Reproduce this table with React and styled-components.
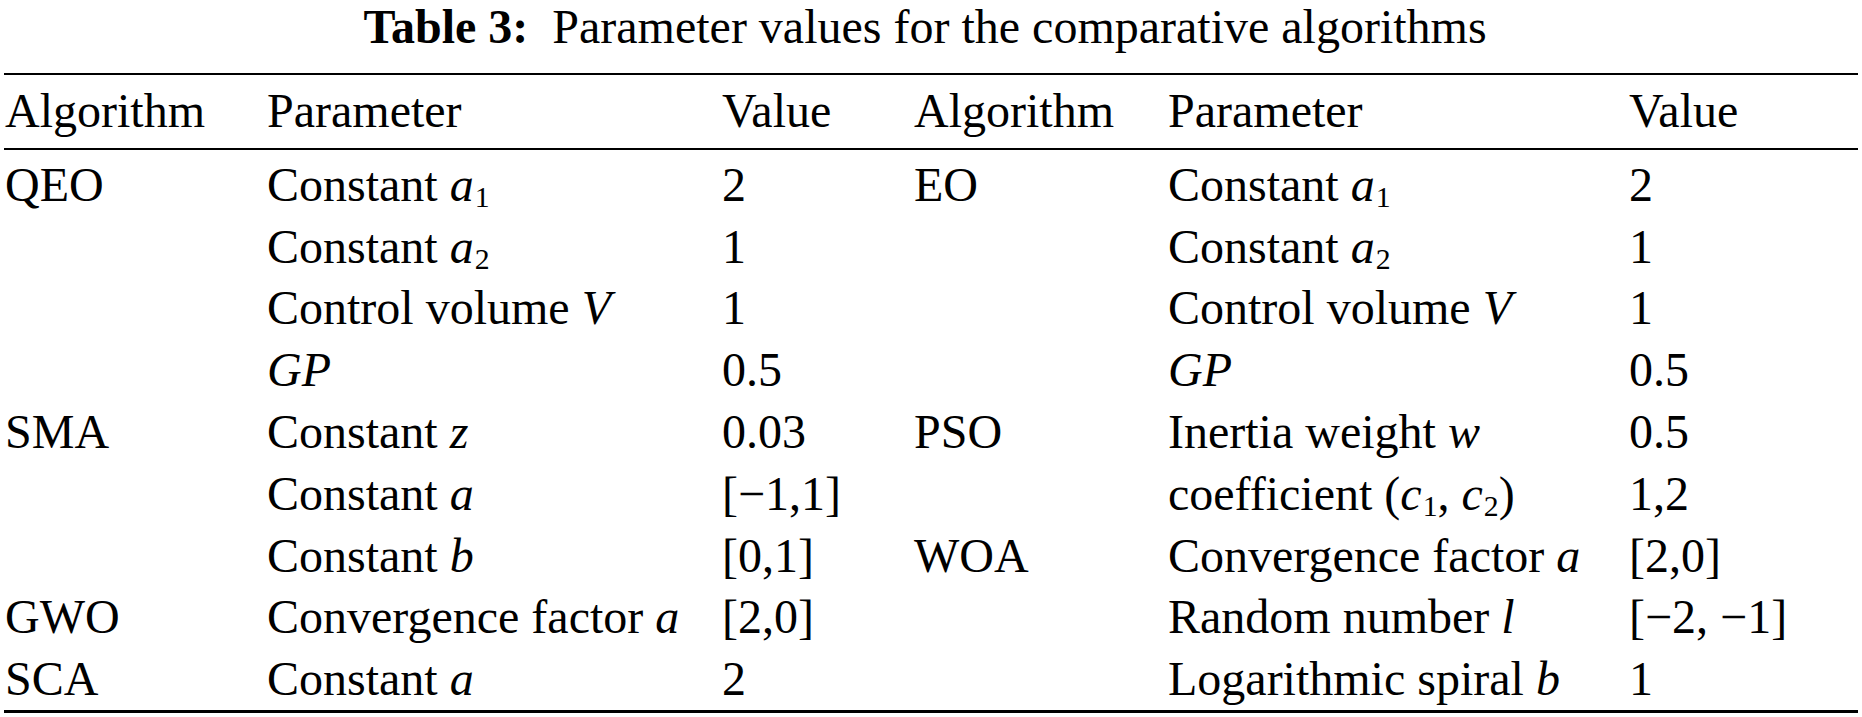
import React from 'react'
import styled, { createGlobalStyle } from 'styled-components'

const GlobalStyle = createGlobalStyle`
    html, body {
        margin: 0;
        padding: 0;
        background: #fff;
    }
    body {
        font-family: "Liberation Serif", "Times New Roman", serif;
        color: #000;
    }
`;

const Page = styled.div`
    width: 1862px;
    height: 717px;
    overflow: hidden;
    padding: 0 4px;
    box-sizing: border-box;
`;

const Caption = styled.div`
    font-size: 48px;
    line-height: 54px;
    text-align: center;
    padding-right: 12px;
`;

const CaptionLabel = styled.b`
    font-weight: bold;
    margin-right: 24px;
`;

const Table = styled.div`
    margin-top: 19px;
    border-top: 2.5px solid #000;
    border-bottom: 3px solid #000;
    font-size: 48px;
    line-height: 61.8px;
`;

const Row = styled.div`
    display: grid;
    grid-template-columns: 262px 455px 192px 254px 461px 1fr;
    padding-left: 1px;
    white-space: nowrap;
`;

const HeadRow = styled(Row)`
    padding-top: 5px;
    padding-bottom: 6px;
    border-bottom: 2px solid #000;
    margin-bottom: 4px;
`;

const Cell = styled.div``;

const Var = styled.i`
    font-style: italic;
`;

const Sub = styled.sub`
    font-size: 0.62em;
    line-height: 0;
    vertical-align: -0.22em;
    margin-left: 1px;
`;

const a1 = <><Var>a</Var><Sub>1</Sub></>;
const a2 = <><Var>a</Var><Sub>2</Sub></>;

const header = ['Algorithm', 'Parameter', 'Value', 'Algorithm', 'Parameter', 'Value'];

const rows = [
    ['QEO', <>Constant {a1}</>, '2', 'EO', <>Constant {a1}</>, '2'],
    ['', <>Constant {a2}</>, '1', '', <>Constant {a2}</>, '1'],
    ['', <>Control volume <Var>V</Var></>, '1', '', <>Control volume <Var>V</Var></>, '1'],
    ['', <Var>GP</Var>, '0.5', '', <Var>GP</Var>, '0.5'],
    ['SMA', <>Constant <Var>z</Var></>, '0.03', 'PSO', <>Inertia weight <Var>w</Var></>, '0.5'],
    ['', <>Constant <Var>a</Var></>, '[\u22121,1]', '',
        <>coefficient (<Var>c</Var><Sub>1</Sub>, <Var>c</Var><Sub>2</Sub>)</>, '1,2'],
    ['', <>Constant <Var>b</Var></>, '[0,1]', 'WOA', <>Convergence factor <Var>a</Var></>, '[2,0]'],
    ['GWO', <>Convergence factor <Var>a</Var></>, '[2,0]', '', <>Random number <Var>l</Var></>, '[\u22122, \u22121]'],
    ['SCA', <>Constant <Var>a</Var></>, '2', '', <>Logarithmic spiral <Var>b</Var></>, '1'],
];

export default function App() {
    return (
        <Page>
            <GlobalStyle />
            <Caption>
                <CaptionLabel>Table 3:</CaptionLabel>Parameter values for the comparative algorithms
            </Caption>
            <Table>
                <HeadRow>
                    {header.map((h, i) => <Cell key={i}>{h}</Cell>)}
                </HeadRow>
                {rows.map((r, index) => (
                    <Row key={index}>
                        {r.map((c, i) => <Cell key={i}>{c}</Cell>)}
                    </Row>
                ))}
            </Table>
        </Page>
    )
}
